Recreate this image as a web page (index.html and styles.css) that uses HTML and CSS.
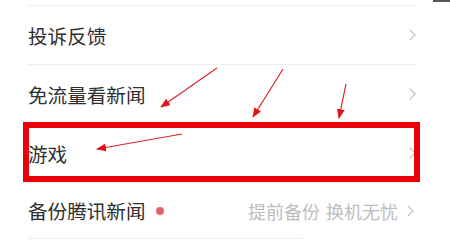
FILE: index.html
```html
<!DOCTYPE html>
<html lang="zh">
<head>
  <meta charset="UTF-8">
  <meta name="viewport" content="width=device-width, initial-scale=1.0">
  <title>设置</title>
  <link rel="stylesheet" href="styles.css">
</head>
<body>
  <div class="page">
    <span class="corner"></span>
    <ul class="menu">
      <li class="row">
        <span class="label">投诉反馈</span>
        <span class="chev"></span>
      </li>
      <li class="row">
        <span class="label">免流量看新闻</span>
        <span class="chev"></span>
      </li>
      <li class="row">
        <span class="label">游戏</span>
        <span class="chev"></span>
      </li>
      <li class="row last">
        <span class="label">备份腾讯新闻</span>
        <span class="dot"></span>
        <span class="hint">提前备份 换机无忧</span>
        <span class="chev"></span>
      </li>
    </ul>
    <div class="tail"></div>

    <div class="highlight"></div>
    <svg class="arrows" width="450" height="240" viewBox="0 0 450 240">
      <defs>
        <marker id="head" markerWidth="10" markerHeight="8" refX="9" refY="4" orient="auto" markerUnits="userSpaceOnUse">
          <path d="M0 0 L10 4 L0 8 Z" fill="#e0141c"/>
        </marker>
      </defs>
      <line x1="217" y1="68" x2="161" y2="107" stroke="#d8262c" stroke-width="1.2" marker-end="url(#head)"/>
      <line x1="283" y1="69" x2="253" y2="117" stroke="#d8262c" stroke-width="1.2" marker-end="url(#head)"/>
      <line x1="346" y1="84" x2="339" y2="118" stroke="#d8262c" stroke-width="1.2" marker-end="url(#head)"/>
      <line x1="182" y1="134" x2="97" y2="149" stroke="#d8262c" stroke-width="1.2" marker-end="url(#head)"/>
    </svg>
  </div>
</body>
</html>
```

FILE: styles.css
```css
body {
  margin: 0;
  padding: 0;
  background: #fff;
  font-family: "Noto Sans CJK SC", "Noto Sans", sans-serif;
}
.page {
  position: relative;
  width: 450px;
  height: 240px;
  overflow: hidden;
  background: #fff;
}
.corner {
  position: absolute;
  top: 0;
  right: 0;
  width: 17px;
  height: 2px;
  background: #555;
}
.menu {
  list-style: none;
  margin: 5px 0 0 27px;
  padding: 0;
  width: 389px;
  border-top: 1px solid #eeeeee;
}
.row {
  display: flex;
  align-items: center;
  height: 58px;
  border-bottom: 1px solid #eeeeee;
}
.row.last {
  height: 55px;
  border-bottom: none;
}
.label {
  padding-left: 1px;
  font-size: 19.6px;
  color: #303030;
}
.dot {
  width: 8px;
  height: 8px;
  margin-left: 10px;
  border-radius: 50%;
  background: #e2626b;
}
.hint {
  margin-left: auto;
  margin-right: 6px;
  font-size: 18px;
  color: #bdbdbd;
  word-spacing: 2px;
}
.chev {
  width: 7px;
  height: 7px;
  margin-left: auto;
  margin-right: 2px;
  border-top: 1.3px solid #b8b8b8;
  border-right: 1.3px solid #b8b8b8;
  transform: rotate(45deg);
}
.hint + .chev {
  margin-left: 0;
  margin-right: 4px;
}
.tail {
  margin-left: 27px;
  width: 276px;
  height: 1px;
  background: #eeeeee;
}
.highlight {
  position: absolute;
  left: 23px;
  top: 122px;
  width: 385px;
  height: 48px;
  border: 6px solid #e8000b;
}
.arrows {
  position: absolute;
  left: 0;
  top: 0;
}
```
